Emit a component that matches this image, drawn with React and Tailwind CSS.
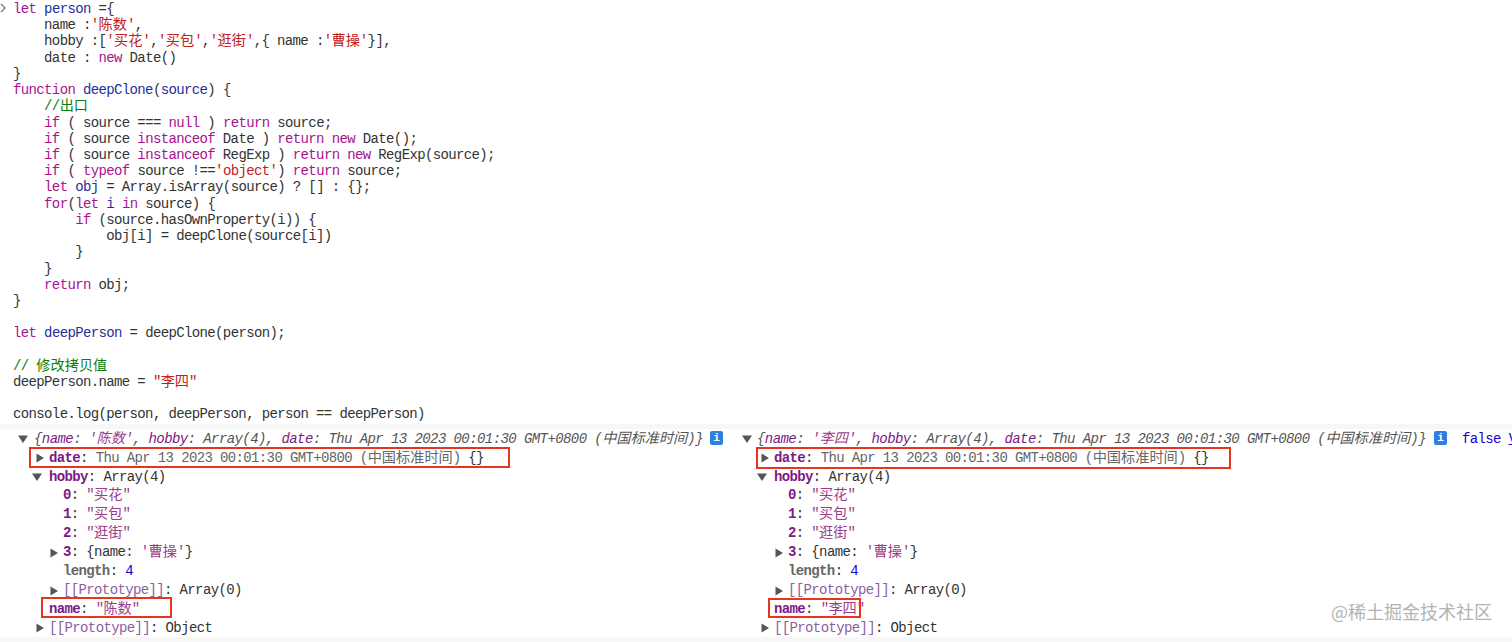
import React from 'react';

const Cn = ({ children }) => <span className="tracking-normal text-[14.2px]">{children}</span>;
const K = ({ children }) => <span className="text-[#a8128f]">{children}</span>;
const V = ({ children }) => <span className="text-[#1f2f9c]">{children}</span>;
const S = ({ children }) => <span className="text-[#c0211b]">{children}</span>;
const C = ({ children }) => <span className="text-[#0a800a]">{children}</span>;

const codeLines = [
  <><K>let</K> <V>person</V> ={'{'}</>,
  <>{'    '}name :<S>'<Cn>陈数</Cn>'</S>,</>,
  <>{'    '}hobby :[<S>'<Cn>买花</Cn>'</S>,<S>'<Cn>买包</Cn>'</S>,<S>'<Cn>逛街</Cn>'</S>,{'{'} name :<S>'<Cn>曹操</Cn>'</S>{'}'}],</>,
  <>{'    '}date : <K>new</K> Date()</>,
  <>{'}'}</>,
  <><K>function</K> <V>deepClone</V>(<V>source</V>) {'{'}</>,
  <>{'    '}<C>//<Cn>出口</Cn></C></>,
  <>{'    '}<K>if</K> ( source === <K>null</K> ) <K>return</K> source;</>,
  <>{'    '}<K>if</K> ( source <K>instanceof</K> Date ) <K>return</K> <K>new</K> Date();</>,
  <>{'    '}<K>if</K> ( source <K>instanceof</K> RegExp ) <K>return</K> <K>new</K> RegExp(source);</>,
  <>{'    '}<K>if</K> ( <K>typeof</K> source !==<S>'object'</S>) <K>return</K> source;</>,
  <>{'    '}<K>let</K> <V>obj</V> = Array.isArray(source) ? [] : {'{}'};</>,
  <>{'    '}<K>for</K>(<K>let</K> <V>i</V> <K>in</K> source) {'{'}</>,
  <>{'        '}<K>if</K> (source.hasOwnProperty(i)) {'{'}</>,
  <>{'            '}obj[i] = deepClone(source[i])</>,
  <>{'        }'}</>,
  <>{'    }'}</>,
  <>{'    '}<K>return</K> obj;</>,
  <>{'}'}</>,
  <>{' '}</>,
  <><K>let</K> <V>deepPerson</V> = deepClone(person);</>,
  <>{' '}</>,
  <><C>// <Cn>修改拷贝值</Cn></C></>,
  <>deepPerson.name = <S>"<Cn>李四</Cn>"</S></>,
  <>{' '}</>,
  <>console.log(person, deepPerson, person == deepPerson)</>,
];

const Arrow = ({ open }) => (
  <svg width="10" height="10" viewBox="0 0 10 10" className="mr-[4px] shrink-0">
    <path d={open ? 'M0 1.5h10L5 9z' : 'M1.5 0.5l7.5 4.5-7.5 4.5z'} fill="#555" />
  </svg>
);

const InfoIcon = () => (
  <span className="flex h-[14px] w-[13px] shrink-0 items-center justify-center rounded-[2px] bg-[#2f7fe0] text-[11px] font-bold leading-none tracking-normal text-white">
    i
  </span>
);

const Key = ({ children }) => <span className="font-bold text-[#7c1a84]">{children}</span>;
const Str = ({ children }) => <span className="text-[#9c3c88]">{children}</span>;

const Row = ({ indent, arrow, children }) => (
  <div className={`flex h-[18.9px] items-center whitespace-pre ${indent}`}>
    {arrow && <Arrow open={arrow === 'open'} />}
    <span>{children}</span>
  </div>
);

const ObjectTree = ({ name }) => (
  <>
    <Row indent="pl-[35px]" arrow="closed">
      <Key>date</Key>: <span className="text-[#666]">Thu Apr 13 2023 00:01:30 GMT+0800 (<Cn>中国标准时间</Cn>)</span> {'{}'}
    </Row>
    <Row indent="pl-[32px]" arrow="open">
      <span className="ml-[3px]"><Key>hobby</Key>: Array(4)</span>
    </Row>
    <Row indent="pl-[63px]"><Key>0</Key>: <Str>"<Cn>买花</Cn>"</Str></Row>
    <Row indent="pl-[63px]"><Key>1</Key>: <Str>"<Cn>买包</Cn>"</Str></Row>
    <Row indent="pl-[63px]"><Key>2</Key>: <Str>"<Cn>逛街</Cn>"</Str></Row>
    <Row indent="pl-[49px]" arrow="closed">
      <Key>3</Key>: {'{'}name: <Str>'<Cn>曹操</Cn>'</Str>{'}'}
    </Row>
    <Row indent="pl-[63px]">
      <span className="font-bold text-[#666]">length</span>: <span className="text-[#1c00cf]">4</span>
    </Row>
    <Row indent="pl-[49px]" arrow="closed">
      <span className="text-[#8b5f9e]">[[Prototype]]</span>: Array(0)
    </Row>
    <Row indent="pl-[49px]"><Key>name</Key>: <Str>"<Cn>{name}</Cn>"</Str></Row>
    <Row indent="pl-[35px]" arrow="closed">
      <span className="text-[#8b5f9e]">[[Prototype]]</span>: Object
    </Row>
  </>
);

const Summary = ({ name }) => (
  <span className="italic tracking-[-0.58px] text-[#555]">
    {'{'}<span className="text-[#7c1a84]">name</span>: <Str>'<Cn>{name}</Cn>'</Str>, <span className="text-[#7c1a84]">hobby</span>: Array(4), <span className="text-[#7c1a84]">date</span>: Thu Apr 13 2023 00:01:30 GMT+0800 (<Cn>中国标准时间</Cn>){'}'}
  </span>
);

export default function App() {
  return (
    <div className="relative h-[642px] w-[1512px] overflow-hidden bg-white font-['Liberation_Mono','Noto_Sans_CJK_SC',monospace] text-[14px] tracking-[-0.63px] text-[#333]">
      <div className="relative h-[424px] pl-[13px] pt-[1px] leading-[16.23px]">
        <svg width="7" height="10" viewBox="0 0 7 10" className="absolute left-0 top-[3px]">
          <path d="M1 1l4 4-4 4" fill="none" stroke="#777" strokeWidth="1.3" />
        </svg>
        {codeLines.map((line, i) => (
          <div key={i} className="h-[16.23px] whitespace-pre">{line}</div>
        ))}
      </div>
      <div className="h-[5px] bg-[#f7f7f7]" />

      <div className="flex h-[208px] pt-[1px]">
        <div className="relative w-[725px] shrink-0">
          <div className="flex h-[18.9px] items-center whitespace-pre pl-[18px]">
            <Arrow open />
            <span className="ml-[2px]"><Summary name="陈数" /></span>
            <span className="absolute left-[710px] top-[1px]"><InfoIcon /></span>
          </div>
          <ObjectTree name="陈数" />
          <div className="absolute left-[29px] top-[17px] h-[21px] w-[481px] border-[2.5px] border-[#e8341c]" />
          <div className="absolute left-[41px] top-[167px] h-[21px] w-[131px] border-[2.5px] border-[#e8341c]" />
        </div>

        <div className="relative min-w-0 flex-1 overflow-hidden">
          <div className="flex h-[18.9px] items-center whitespace-pre pl-[17px]">
            <Arrow open />
            <span className="ml-[1px]"><Summary name="李四" /></span>
            <span className="absolute left-[709px] top-[1px]"><InfoIcon /></span>
            <span className="absolute left-[737px] top-0 leading-[18.9px] text-[#1c00cf]">false <span className="underline">V</span></span>
          </div>
          <ObjectTree name="李四" />
          <div className="absolute left-[31px] top-[17px] h-[22px] w-[475px] border-[2.5px] border-[#e8341c]" />
          <div className="absolute left-[43px] top-[168px] h-[20px] w-[93px] border-[2.5px] border-[#e8341c]" />
        </div>
      </div>
      <div className="h-[5px] bg-[#f7f7f7]" />

      <div className="absolute left-[1331px] top-[599px] font-['Noto_Sans_CJK_SC',sans-serif] text-[18px] leading-[24px] tracking-normal text-[#b3b3b3]">
        @稀土掘金技术社区
      </div>
    </div>
  );
}
